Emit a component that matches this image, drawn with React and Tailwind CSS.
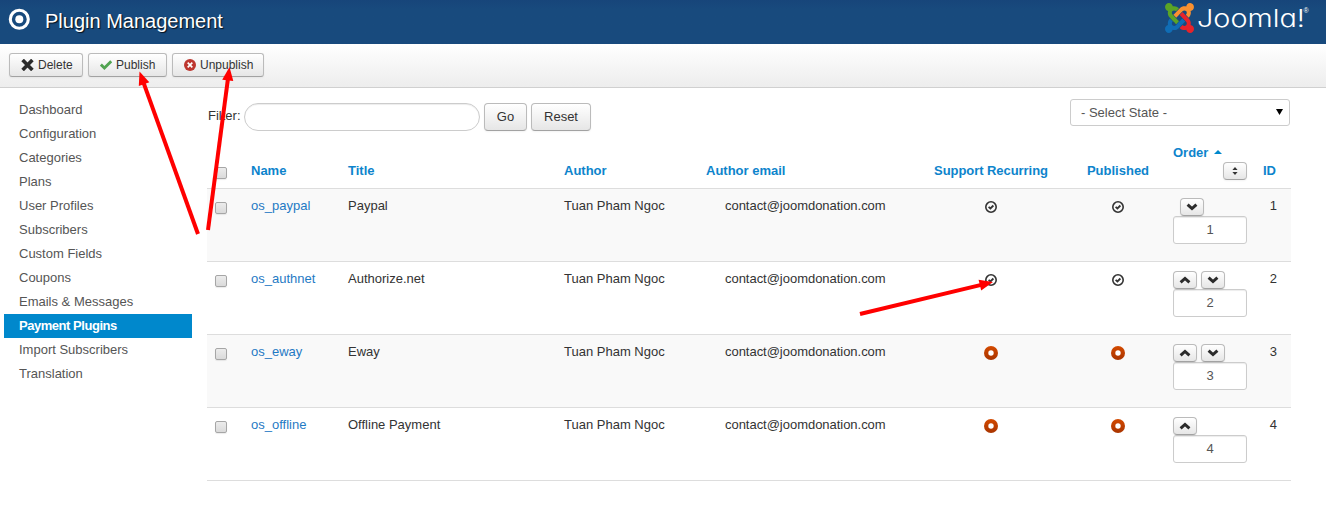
import React from "react";

const MENU = [
  "Dashboard",
  "Configuration",
  "Categories",
  "Plans",
  "User Profiles",
  "Subscribers",
  "Custom Fields",
  "Coupons",
  "Emails & Messages",
  "Payment Plugins",
  "Import Subscribers",
  "Translation",
];

const PLUGINS = [
  { id: 1, name: "os_paypal", title: "Paypal", on: true, up: false, down: true },
  { id: 2, name: "os_authnet", title: "Authorize.net", on: true, up: true, down: true },
  { id: 3, name: "os_eway", title: "Eway", on: false, up: true, down: true },
  { id: 4, name: "os_offline", title: "Offline Payment", on: false, up: true, down: false },
];

const COLS = "grid grid-cols-[44px_97px_216px_142px_200px_170px_84px_100px_31px]";
const BTN =
  "border border-[#bbb] border-b-[#a2a2a2] bg-linear-to-b from-white to-[#e6e6e6] shadow-[inset_0_1px_0_rgba(255,255,255,.2),0_1px_2px_rgba(0,0,0,.05)]";

function Checkbox({ className = "" }) {
  return (
    <span
      className={
        "block h-[12px] w-[12px] rounded-[2px] border border-[#a6a6a6] bg-linear-to-b from-[#ececec] to-[#dadada] shadow-[0_1px_1px_rgba(0,0,0,.08)] " +
        className
      }
    />
  );
}

function TargetIcon() {
  return (
    <svg className="block" width="22" height="22" viewBox="0 0 22 22">
      <circle cx="11.3" cy="11.3" r="9" fill="none" stroke="#fff" strokeWidth="3.1" />
      <circle cx="11.3" cy="11.3" r="4" fill="#fff" />
    </svg>
  );
}

function JoomlaMark() {
  return (
    <svg className="mt-px block" width="29" height="30" viewBox="0 32 448 448" preserveAspectRatio="none">
      <path
        fill="#5aa426"
        d="M.6 92.1C.6 58.8 27.4 32 60.4 32c30 0 54.5 21.9 59.2 50.2 32.6-7.6 67.1.6 96.5 30l-44.3 44.3c-20.5-20.5-42.6-16.3-55.4-3.5-14.3 14.3-14.3 37.9 0 52.2l99.5 99.5-44 44.3c-87.7-87.2-49.7-49.7-99.8-99.7-26.8-26.5-35-64.8-24.8-98.9C20.4 144.6.6 120.7.6 92.1z"
      />
      <path
        fill="#fa9130"
        d="M130.100 208.500l44.3 44.3c10-10 89.7-89.7 99.7-99.8 14.3-14.3 37.6-14.3 51.9 0 12.8 12.8 17 35-3.5 55.4l44 44.3c31.2-31.2 38.5-67.6 28.9-101.2 29.2-4.1 51.9-29.2 51.9-59.5 0-33.2-26.8-60.1-59.8-60.1-30.3 0-55.4 22.5-59.5 51.6-33.8-9.9-71.7-1.5-98.3 25.1-18.3 19.1-71.1 71.5-99.6 99.9z"
      />
      <path
        fill="#e8232a"
        d="M396.400 360.700c8.2-32.7-.9-68.5-26.3-93.9-11.8-12.2 5 4.7-99.5-99.7l-44.3 44.3 99.7 99.7c14.3 14.3 14.3 37.6 0 51.9-12.8 12.8-35 17-55.4-3.5l-44 44.3c27.6 30.2 68 38.8 102.7 28 5.5 27.4 29.7 48.1 58.9 48.1 33 0 59.8-26.8 59.8-60.1 0-30.2-22.5-55-51.6-59.1z"
      />
      <path
        fill="#106db5"
        d="M312.100 307.600l-44-44.3c-87 86.4-50.4 50.4-99.7 99.8-14.3 14.3-37.6 14.3-51.9 0-13.1-13.4-16.9-35.3 3.2-55.4l-44-44.3c-30.2 30.2-38 65.2-29.5 98.3-26.7 6-46.2 29.9-46.2 58.2C0 453.2 26.8 480 59.8 480c28.6 0 52.5-19.8 58.6-46.7 32.7 8.2 68.5-.6 94.2-26 32.1-32 12.2-12.4 99.5-99.7z"
      />
    </svg>
  );
}

function JoomlaLogo() {
  return (
    <div className="flex">
      <JoomlaMark />
      <svg className="block" width="116" height="36" viewBox="0 0 116 36">
        <text
          className="[font-feature-settings:'cv11']"
          x="3"
          y="24.500"
          fill="#fff"
          fontFamily="Inter, sans-serif"
          fontWeight="300"
          fontSize="24"
          textLength="108"
          lengthAdjust="spacingAndGlyphs"
        >
          Joomla!
        </text>
        <text x="109.500" y="10.500" fill="#fff" fontFamily="Liberation Sans, sans-serif" fontSize="7">
          ®
        </text>
      </svg>
    </div>
  );
}

function CrossIcon() {
  return (
    <svg className="block" width="13" height="12" viewBox="0 0 13 12">
      <path d="M1.6 1 L11.4 11 M11.4 1 L1.6 11" stroke="#2b2b2b" strokeWidth="3.6" />
    </svg>
  );
}

function CheckIcon() {
  return (
    <svg className="block" width="12" height="12" viewBox="0 0 12 12">
      <path d="M.9 5.6 L4.4 9 L11.2 2.2" fill="none" stroke="#51a351" strokeWidth="2.8" />
    </svg>
  );
}

function CancelIcon() {
  return (
    <svg className="block" width="12" height="12" viewBox="0 0 12 12">
      <circle cx="6" cy="6" r="6" fill="#bd362f" />
      <path d="M3.7 3.7 L8.3 8.3 M8.3 3.7 L3.7 8.3" stroke="#fff" strokeWidth="1.7" />
    </svg>
  );
}

function StatusIcon({ on }) {
  return on ? (
    <svg className="mt-[11px] block" width="14" height="14" viewBox="0 0 14 14">
      <circle cx="7" cy="7" r="5.2" fill="none" stroke="#333" strokeWidth="1.6" />
      <path d="M4.600 6.900 L6.400 8.500 L9.400 5.500" fill="none" stroke="#333" strokeWidth="1.8" />
    </svg>
  ) : (
    <svg className="mt-[11px] block" width="14" height="14" viewBox="0 0 14 14">
      <defs>
        <linearGradient id="off" x1="0" y1="0" x2="0" y2="1">
          <stop offset="0" stopColor="#d44a00" />
          <stop offset="1" stopColor="#a83400" />
        </linearGradient>
      </defs>
      <circle cx="7" cy="7" r="7" fill="url(#off)" />
      <circle cx="7" cy="7" r="2.7" fill="#fff" />
    </svg>
  );
}

function MoveButton({ up, className = "" }) {
  return (
    <span className={"flex h-[18px] w-[24px] items-center justify-center rounded-[4px] " + BTN + " " + className}>
      <svg width="12" height="8" viewBox="0 0 12 8">
        <path d={up ? "M1.6 6.300 L6 2.400 L10.4 6.300" : "M1.6 1.700 L6 5.600 L10.4 1.700"} fill="none" stroke="#2b2b2b" strokeWidth="3" />
      </svg>
    </span>
  );
}

function ToolButton({ icon, label, className }) {
  return (
    <button className={"flex h-6 items-center rounded-[3px] text-[12px] text-[#333] " + BTN + " " + className}>
      {icon}
      <span>{label}</span>
    </button>
  );
}

function Arrow({ from, to }) {
  const dx = to[0] - from[0];
  const dy = to[1] - from[1];
  const len = Math.hypot(dx, dy);
  const angle = (Math.atan2(dy, dx) * 180) / Math.PI;
  return (
    <g transform={`translate(${from[0]} ${from[1]}) rotate(${angle})`} fill="#f00">
      <rect x="0" y="-2" width={len - 10} height="4" />
      <path d={`M${len} 0 L${len - 13.5} -5.6 L${len - 13.5} 5.6 Z`} />
    </g>
  );
}

export default function App() {
  return (
    <div className="relative h-[509px] w-[1326px] overflow-hidden bg-white font-['Liberation_Sans',Arial,sans-serif] text-[13px] leading-[18px] text-[#333]">
      <header className="flex h-[44px] justify-between bg-linear-to-b from-[#17457a] to-[#184a7d] to-20%">
        <div className="flex items-start pl-[8px] pt-[8px]">
          <TargetIcon />
          <h1 className="ml-[15px] text-[20px] leading-[26px] text-white [text-shadow:1px_1px_1px_rgba(0,0,0,.8)]">
            Plugin Management
          </h1>
        </div>
        <div className="pr-[16px] pt-[2px]">
          <JoomlaLogo />
        </div>
      </header>

      <div className="flex h-[44px] gap-[5px] border-b border-[#d0d0d0] bg-linear-to-b from-white to-[#ededed] pl-[9px] pt-[9px]">
        <ToolButton icon={<CrossIcon />} label="Delete" className="w-[74px] gap-[4px] pl-[11px]" />
        <ToolButton icon={<CheckIcon />} label="Publish" className="w-[79px] gap-[4px] pl-[11px]" />
        <ToolButton icon={<CancelIcon />} label="Unpublish" className="w-[92px] gap-[4px] pl-[11px]" />
      </div>

      <div className="flex">
        <nav className="ml-1 mt-[10px] w-[188px] shrink-0">
          {MENU.map((item) => (
            <div
              key={item}
              className={
                item === "Payment Plugins"
                  ? "h-6 bg-[#08c] pl-[15px] leading-6 font-bold tracking-[-0.46px] text-white"
                  : "h-6 pl-[15px] leading-6 text-[#555]"
              }
            >
              {item}
            </div>
          ))}
        </nav>

        <main className="ml-[15px] w-[1084px] shrink-0">
          <div className="flex h-[56px] items-start">
            <label className="mt-[19px] w-[37px] pl-px">Filter:</label>
            <div className="mt-[15px] h-[28px] w-[236px] rounded-[14px] border border-[#ccc] bg-white shadow-[inset_0_1px_1px_rgba(0,0,0,.075)]" />
            <button className={"ml-[4px] mt-[15px] h-[28px] w-[43px] rounded-[4px] " + BTN}>Go</button>
            <button className={"ml-[4px] mt-[15px] h-[28px] w-[60px] rounded-[4px] " + BTN}>Reset</button>
            <div className="ml-auto mr-px mt-[11px] flex h-[27px] w-[220px] items-center justify-between rounded-[3px] border border-[#ccc] bg-white pl-[10px] pr-[6px] text-[#555]">
              <span>- Select State -</span>
              <svg className="-mt-[2px]" width="7" height="6" viewBox="0 0 7 6">
                <path d="M0 0 H7 L3.5 6 Z" fill="#000" />
              </svg>
            </div>
          </div>

          <div className={COLS + " h-[44px] items-end pb-[8px] font-bold text-[#0d84cc]"}>
            <Checkbox className="mb-px ml-[8px]" />
            <span>Name</span>
            <span>Title</span>
            <span>Author</span>
            <span>Author email</span>
            <span className="text-center tracking-[-0.06px]">Support Recurring</span>
            <span className="text-center">Published</span>
            <div className="pl-[13px]">
              <div className="flex items-center gap-[6px]">
                Order
                <svg className="-mt-[2px]" width="8" height="4" viewBox="0 0 8 4">
                  <path d="M4 0 L8 4 H0 Z" fill="#08c" />
                </svg>
              </div>
              <span className={"ml-[50px] flex h-[18px] w-[24px] items-center justify-center rounded-[4px] " + BTN}>
                <svg width="6" height="8" viewBox="0 0 6 8">
                  <path d="M3 0 L5.6 3 H.4 Z M3 8 L.4 5 H5.6 Z" fill="#333" />
                </svg>
              </span>
            </div>
            <span className="pr-[15px] text-right">ID</span>
          </div>

          <div className="border-b border-[#ddd]">
            {PLUGINS.map((p) => (
              <div
                key={p.id}
                className={COLS + " h-[73px] border-t border-[#ddd] " + (p.id % 2 ? "bg-[#f9f9f9]" : "bg-white")}
              >
                <Checkbox className="ml-[8px] mt-[13px]" />
                <span className="pt-[8px] text-[#1f7ac4]">{p.name}</span>
                <span className="pt-[8px]">{p.title}</span>
                <span className="pt-[8px]">Tuan Pham Ngoc</span>
                <span className="pl-[19px] pt-[8px] tracking-[-0.03px]">contact@joomdonation.com</span>
                <div className="flex justify-center">
                  <StatusIcon on={p.on} />
                </div>
                <div className="flex justify-center">
                  <StatusIcon on={p.on} />
                </div>
                <div className="pl-[13px] pt-[9px]">
                  <div className="flex gap-[4px]">
                    {p.up && <MoveButton up />}
                    {p.down && <MoveButton className={p.up ? "" : "ml-[7px]"} />}
                  </div>
                  <div className="h-[28px] w-[74px] rounded-[3px] border border-[#ccc] bg-white text-center leading-[26px] text-[#555] shadow-[inset_0_1px_1px_rgba(0,0,0,.075)]">
                    {p.id}
                  </div>
                </div>
                <span className="pr-[14px] pt-[8px] text-right">{p.id}</span>
              </div>
            ))}
          </div>
        </main>
      </div>

      <svg className="pointer-events-none absolute inset-0" width="1326" height="509" viewBox="0 0 1326 509">
        <Arrow from={[198, 234]} to={[139.5, 71.5]} />
        <Arrow from={[208, 230]} to={[229.5, 67]} />
        <Arrow from={[860, 314]} to={[993, 282]} />
      </svg>
    </div>
  );
}
